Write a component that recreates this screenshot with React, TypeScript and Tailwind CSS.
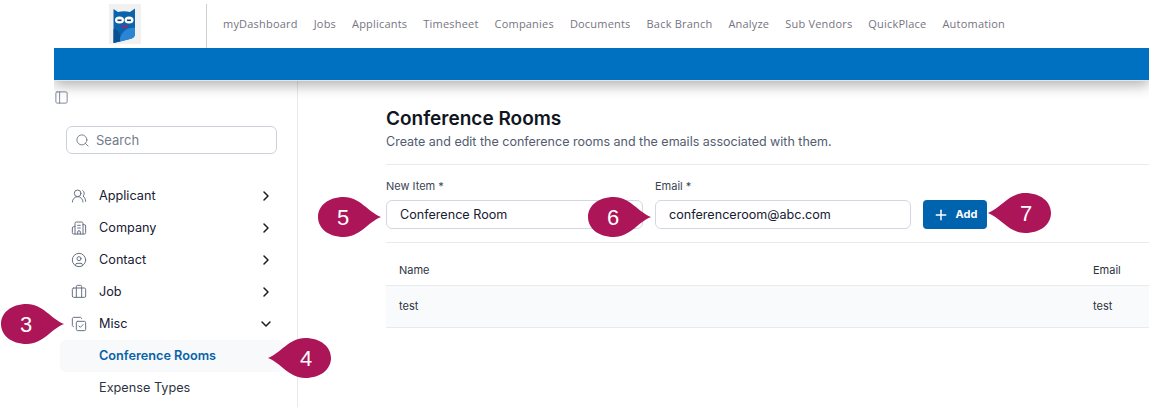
import React from 'react';
import {
  Briefcase,
  Building2,
  ChevronDown,
  ChevronRight,
  CircleUser,
  CopyCheck,
  PanelLeft,
  Plus,
  Search,
  UsersRound,
} from 'lucide-react';

const topLinks = [
  'myDashboard',
  'Jobs',
  'Applicants',
  'Timesheet',
  'Companies',
  'Documents',
  'Back Branch',
  'Analyze',
  'Sub Vendors',
  'QuickPlace',
  'Automation',
];

const sideLinks = [
  { icon: UsersRound, label: 'Applicant' },
  { icon: Building2, label: 'Company' },
  { icon: CircleUser, label: 'Contact' },
  { icon: Briefcase, label: 'Job' },
];

function Owl() {
  return (
    <svg viewBox="0 0 32 40" className="h-10 w-8">
      <rect width="32" height="40" fill="#f1f1f1" />
      <path d="M4.5 5 L9 8 Q15 6.5 21 8 L26 4.5 V30 Q26 34 21 35 L4.5 39 Z" fill="#0b62ad" />
      <path d="M10 38 Q12 28 18 25 Q23 23 26 24 V30 Q26 34 21 35 Z" fill="#2a86d4" />
      <path d="M4.5 25 Q10 26 11 31 V37.5 L4.5 39 Z" fill="#0a4f92" />
      <ellipse cx="10.5" cy="16" rx="4.5" ry="3.6" fill="#fff" />
      <ellipse cx="20" cy="16" rx="4.5" ry="3.6" fill="#fff" />
      <rect x="8.5" y="15.5" width="4" height="1.6" fill="#1d3f66" />
      <rect x="18" y="15.5" width="4" height="1.6" fill="#1d3f66" />
      <path d="M12.5 21 L15.5 22.2 L18.5 21 V24 L15.5 22.8 L12.5 24 Z" fill="#c2185b" />
    </svg>
  );
}

// teardrop callout, the point is on the left or on the right of the body
function Callout({ n, className, flip }: { n: number; className: string; flip?: boolean }) {
  return (
    <div className={`absolute h-10 w-[63px] ${className}`}>
      <svg viewBox="0 0 63 40" className="absolute inset-0 h-10 w-[63px]">
        <path
          d={
            flip
              ? 'M0 20 C13 15 21 0 37 0 C53 0 63 9 63 20 C63 31 53 40 37 40 C21 40 13 25 0 20 Z'
              : 'M63 20 C50 15 42 0 26 0 C10 0 0 9 0 20 C0 31 10 40 26 40 C42 40 50 25 63 20 Z'
          }
          fill="#ac1558"
        />
      </svg>
      <span
        className={`absolute top-0 flex h-10 w-10 items-center justify-center font-['Liberation_Sans'] text-[22px] text-white ${
          flip ? 'right-[5px]' : 'left-[5px]'
        }`}
      >
        {n}
      </span>
    </div>
  );
}

export default function App() {
  return (
    <div className="relative h-[407px] w-[1149px] overflow-hidden bg-white font-['Inter',sans-serif]">
      {/* Top bar */}
      <header className="relative z-10">
        <div className="flex h-12 items-start pl-[109px] pt-1">
          <Owl />
          <div className="ml-[65px] h-11 w-px bg-[#cfcfcf]" />
          <nav className="ml-4 flex h-10 items-center gap-4 font-['Open_Sans',sans-serif] text-[11px] tracking-[0.2px] text-[#77747f]">
            {topLinks.map((link) => (
              <span key={link} className="whitespace-nowrap">
                {link}
              </span>
            ))}
          </nav>
        </div>
        <div className="ml-[54px] h-[33px] border-b border-[#e4e4e4] bg-[#0070c0] shadow-[0_4px_14px_rgba(0,0,0,0.32)] [clip-path:inset(0_0_-30px_0)]" />
      </header>

      <div className="ml-[54px] flex h-[326px]">
        {/* Sidebar */}
        <aside className="w-[244px] shrink-0 border-r border-[#e8eaee]">
          <div className="pt-[9px] text-[#7b8497]">
            <PanelLeft size={15} strokeWidth={1.5} />
          </div>
          <div className="ml-3 mt-[21px] flex h-7 w-[211px] items-center gap-[6px] rounded-md border border-[#ccd1dc] pl-2 pt-px text-[13px] text-[#737b8c]">
            <Search size={15} strokeWidth={1.5} />
            Search
          </div>
          <ul className="mt-[26px] pl-[6px] pr-[14px] text-[12.7px] text-[#172033]">
            {sideLinks.map(({ icon: Icon, label }) => (
              <li key={label} className="flex h-8 items-center pl-[11px] pr-[9px]">
                <Icon size={16} strokeWidth={1.5} className="text-[#687184]" />
                <span className="ml-[12px] flex-1">{label}</span>
                <ChevronRight size={16} strokeWidth={2.25} className="text-[#1c1c1c]" />
              </li>
            ))}
            <li className="flex h-8 items-center pl-[11px] pr-[9px]">
              <CopyCheck size={16} strokeWidth={1.5} className="text-[#687184]" />
              <span className="ml-[12px] flex-1">Misc</span>
              <ChevronDown size={16} strokeWidth={2.25} className="text-[#1c1c1c]" />
            </li>
            <li className="flex h-8 items-center rounded-md bg-[#f8f9fb] pl-[39px] font-semibold text-[#0863a8]">
              Conference Rooms
            </li>
            <li className="flex h-8 items-center pl-[39px] text-[#2d3443]">Expense Types</li>
          </ul>
        </aside>

        {/* Main content */}
        <main className="min-w-0 flex-1 pl-[88px]">
          <div className="h-[84px] border-b border-[#e8eaee] pt-[26px]">
            <h1 className="text-[19px]/6 font-semibold text-[#101522]">Conference Rooms</h1>
            <p className="mt-px text-[12.5px]/5 text-[#525c70]">
              Create and edit the conference rooms and the emails associated with them.
            </p>
          </div>
          <div className="flex h-[78px] items-start gap-3 border-b border-[#e8eaee] pt-[14px]">
            <label className="w-[257px]">
              <span className="block text-[11px]/[14px] text-[#3d4555]">New Item *</span>
              <input
                readOnly
                value="Conference Room"
                className="mt-[7px] h-[29px] w-full rounded-md border border-[#d3d7e0] pb-px pl-[13px] text-[12.6px] text-[#172033]"
              />
            </label>
            <label className="w-[256px]">
              <span className="block text-[11px]/[14px] text-[#3d4555]">Email *</span>
              <input
                readOnly
                value="conferenceroom@abc.com"
                className="mt-[7px] h-[29px] w-full rounded-md border border-[#d3d7e0] pb-px pl-[13px] text-[12.6px] text-[#172033]"
              />
            </label>
            <button className="mt-[21px] flex h-[29px] w-16 items-center justify-center gap-[7px] rounded bg-[#0063ad] text-[11px] font-bold text-white">
              <Plus size={16} strokeWidth={2.25} />
              Add
            </button>
          </div>
          <div className="flex h-[42px] items-center justify-between pl-[13px] pt-[12px] text-[11px] text-[#2d3443]">
            <span>Name</span>
            <span className="w-[56px]">Email</span>
          </div>
          <div className="flex h-[43px] items-center justify-between border-y border-[#e8eaee] bg-[#f9fafb] pl-[13px] text-[11px] text-[#2d3443]">
            <span>test</span>
            <span className="w-[56px]">test</span>
          </div>
        </main>
      </div>

      <Callout n={3} className="left-[1px] top-[304px]" />
      <Callout n={4} className="left-[268px] top-[338px]" flip />
      <Callout n={5} className="left-[318px] top-[197px]" />
      <Callout n={6} className="left-[588px] top-[197px]" />
      <Callout n={7} className="left-[988px] top-[193px]" flip />
    </div>
  );
}
